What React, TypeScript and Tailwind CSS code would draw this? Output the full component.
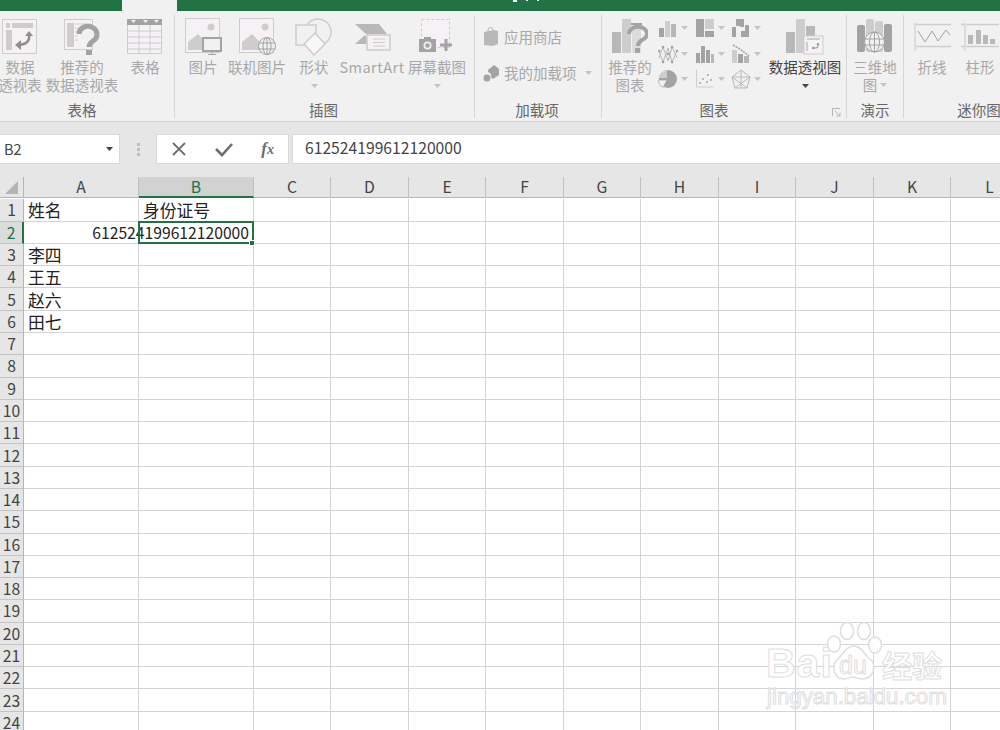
import type { ReactNode } from "react";

const G = "#b8b8b8";
const D = "#a3a3a3";
const L = "#f5f1f5";
const S = "#cdcdcd";

const columns = ["A", "B", "C", "D", "E", "F", "G", "H", "I", "J", "K", "L"];
const rows = Array.from({ length: 24 }, (_, i) => i + 1);
const names: Record<number, string> = { 1: "姓名", 3: "李四", 4: "王五", 5: "赵六", 6: "田七" };

function Caret({ dark }: { dark?: boolean }) {
  return (
    <svg width="7" height="4" viewBox="0 0 7 4">
      <path d="M0 0h7L3.500 4z" fill={dark ? "#444" : "#c4c4c4"} />
    </svg>
  );
}

function Btn({ w, icon, lines, caret, dark, wide }: { w: string; icon: ReactNode; lines: string[]; caret?: boolean; dark?: boolean; wide?: boolean }) {
  return (
    <div className={`${w} flex flex-col items-center shrink-0`}>
      <div className="h-[43px] flex items-center justify-center">{icon}</div>
      {lines.map((l) => (
        <div
          key={l}
          className={`h-[18px] leading-[18px] text-[14.500px] whitespace-nowrap ${dark ? "text-[#444444]" : "text-[#a8a8a8]"} ${wide ? "tracking-[0.5px]" : ""}`}
        >
          {l}
        </div>
      ))}
      {caret && (
        <div className="h-[18px] flex items-center pt-[2px]">
          <Caret dark={dark} />
        </div>
      )}
    </div>
  );
}

function Group({ w, label, children, pl, labelPr, noBorder }: { w: string; label: string; children: ReactNode; pl?: string; labelPr?: string; noBorder?: boolean }) {
  return (
    <div className={`${w} h-[103px] mt-[4px] shrink-0 flex flex-col relative ${noBorder ? "" : "border-r border-[#d6d6d6]"}`}>
      <div className={`flex-1 flex ${pl ?? ""}`}>{children}</div>
      <div className={`h-[18px] leading-[20px] text-center text-[14.500px] text-[#666666] whitespace-nowrap ${labelPr ?? ""}`}>{label}</div>
    </div>
  );
}

const PivotIcon = () => (
  <svg width="36" height="36" viewBox="0 0 36 36">
    <rect x=".5" y=".5" width="34" height="34" fill={L} stroke={S} />
    <rect x="4" y="4" width="4" height="5" fill={S} />
    <rect x="10" y="4" width="21" height="5" fill={S} />
    <rect x="4" y="11" width="6" height="20" fill={S} />
    <path d="M27 15c1 6-1 10-10 11" fill="none" stroke="#8f8f8f" strokeWidth="2.500" />
    <path d="M23 17l4-5 4 5zM19 21l-6 5 6 5z" fill="#8f8f8f" />
  </svg>
);

const RecPivotIcon = () => (
  <svg width="36" height="36" viewBox="0 0 36 36">
    <rect x=".5" y=".5" width="28" height="30" fill={L} stroke={S} />
    <rect x="3" y="4" width="7" height="24" fill={S} />
    <path d="M11 5h15M11 9h15M11 13h5M11 17h3M11 21h3" stroke={S} />
    <path d="M15 15a9 8 0 1 1 14 7c-3 2-4 3-4 6" fill="#f1f1f1" stroke={D} strokeWidth="5" />
    <rect x="22" y="31" width="6" height="5" fill={D} />
  </svg>
);

const TableIcon = () => (
  <svg width="36" height="36" viewBox="0 0 36 36">
    <rect x=".5" y=".5" width="34" height="34" fill={L} stroke={S} />
    <rect x="0" y="0" width="35" height="6" fill={D} />
    <path d="M4 1h5l-2.500 3zM16 1h5l-2.500 3zM27 1h5l-2.500 3z" fill="#f1f1f1" />
    <path d="M0 12h35M0 18h35M0 24h35M0 30h35M12 6v29M23 6v29" stroke={S} />
  </svg>
);

const PictureBase = () => (
  <>
    <rect x=".5" y=".5" width="34" height="34" fill={L} stroke={S} />
    <circle cx="26" cy="9" r="3.500" fill={S} />
    <path d="M3 32V24L13 16l8 8 5-2v10z" fill={S} />
  </>
);

const PictureIcon = () => (
  <svg width="37" height="37" viewBox="0 0 37 37">
    <PictureBase />
    <rect x="18" y="20" width="18" height="13" fill="#f1f1f1" stroke={D} strokeWidth="2" />
    <path d="M27 33v3M23 36.500h8" stroke={D} />
  </svg>
);

const OnlinePictureIcon = () => (
  <svg width="37" height="37" viewBox="0 0 37 37">
    <PictureBase />
    <circle cx="28" cy="28" r="8.500" fill="#f1f1f1" stroke={D} />
    <ellipse cx="28" cy="28" rx="4" ry="8.500" fill="none" stroke={D} />
    <path d="M20 25h16M20 31h16M28 19v18" stroke={D} />
  </svg>
);

const ShapesIcon = () => (
  <svg width="38" height="38" viewBox="0 0 38 38">
    <circle cx="23" cy="14" r="13" fill="none" stroke={S} strokeWidth="1.500" />
    <rect x="1" y="7" width="20" height="20" fill="#f1f1f1" stroke={S} strokeWidth="1.500" />
    <path d="M20 15l10 11-11 11-10-11z" fill="#f8f6f8" stroke={S} strokeWidth="1.500" />
  </svg>
);

const SmartArtIcon = () => (
  <svg width="37" height="28" viewBox="0 0 37 28">
    <path d="M1 1h24l8 10h-21zM1 21l10-9 4 9z" fill={G} />
    <rect x="13" y="12" width="23" height="15" fill={L} stroke={S} strokeWidth="1.500" />
    <path d="M19 16h12M19 19.500h12M19 23h12" stroke={S} />
  </svg>
);

const ScreenshotIcon = () => (
  <svg width="36" height="35" viewBox="0 0 36 35">
    <rect x="2.500" y=".5" width="28" height="28" fill={L} stroke={S} strokeDasharray="3 2" />
    <rect x="0" y="20" width="17" height="13" fill={D} />
    <rect x="5" y="18" width="7" height="3" fill={D} />
    <circle cx="8.500" cy="26.500" r="4" fill="#f1f1f1" />
    <circle cx="8.500" cy="26.500" r="2.300" fill={D} />
    <path d="M21 26h12M27 20v12" stroke={D} strokeWidth="3" />
  </svg>
);

const StoreIcon = () => (
  <svg width="16" height="20" viewBox="0 0 16 20">
    <path d="M1 5l10-2 4 1v13l-5 2-9-1z" fill={G} />
    <path d="M5 5V3a2.500 2.500 0 0 1 5 0v2" fill="none" stroke={G} />
  </svg>
);

const AddinIcon = () => (
  <svg width="16" height="17" viewBox="0 0 16 17">
    <path d="M5 5l6-5 5 4v6l-6 4-2-2a4 4 0 0 0-3-5z" fill={D} />
    <circle cx="4" cy="13" r="3.500" fill={D} />
  </svg>
);

const RecChartIcon = () => (
  <svg width="36" height="36" viewBox="0 0 36 36">
    <rect x="0" y="13" width="9" height="21" fill={G} />
    <rect x="10" y="0" width="9" height="34" fill={S} />
    <rect x="20" y="8" width="9" height="26" fill="#dcdcdc" />
    <path d="M17 15a9 7 0 1 1 13 6c-3 2-4 3-4 6" fill="none" stroke={D} strokeWidth="4" />
    <path d="M19 5h11" stroke={D} strokeWidth="2" />
    <rect x="23" y="29" width="5" height="5" fill={D} />
  </svg>
);

const Small = ({ children }: { children: ReactNode }) => (
  <div className="flex items-center gap-[3px] w-[36.500px]">
    <svg width="20" height="20" viewBox="0 0 20 20">
      {children}
    </svg>
    <Caret />
  </div>
);

const ChartGrid = () => (
  <div className="grid grid-cols-3 gap-y-[5.500px] w-[110px] pt-[3px]">
    <Small>
      <path d="M1 10h5v9H1z" fill={D} /><path d="M7 3h5v16H7z" fill={S} /><path d="M13 6h5v13h-5z" fill={G} />
    </Small>
    <Small>
      <path d="M1 1h8v18H1z" fill={D} /><path d="M10 1h9v10h-9z" fill={S} /><path d="M10 13h9v6h-9z" fill={D} />
    </Small>
    <Small>
      <path d="M1 9h4v10H1zM5 8h4V1h-4zM9 1h4v8H9zM10 13h4v6h-4zM14 7h4v12h-4z" fill={D} />
    </Small>
    <Small>
      <path d="M1 7l4 11 5-14 4 14 5-11M1 14L5 3l5 14 4-14 5 11" fill="none" stroke={G} />
      <path d="M5 3h.1M14 3h.1M5 18h.1M14 18h.1M1 7h.1M19 7h.1M10 10h.1" stroke={D} strokeWidth="2.500" strokeLinecap="round" />
    </Small>
    <Small>
      <path d="M1 9h4v10H1z" fill={D} /><path d="M6 2h4v17H6z" fill={D} /><path d="M11 6h4v13h-4z" fill={D} /><path d="M16 10h3v9h-3z" fill={G} />
    </Small>
    <Small>
      <path d="M1 6h5v13H1z" fill={S} /><path d="M7 10h5v9H7z" fill={D} /><path d="M13 12h5v7h-5z" fill={G} /><path d="M2 1l7 4 9 7" fill="none" stroke={D} strokeDasharray="2 1" strokeWidth="1.500" />
    </Small>
    <Small>
      <circle cx="10" cy="10" r="9" fill={D} /><path d="M9 11H0.5A9 9 0 0 0 5 18.500z" fill="#f1f1f1" stroke={D} strokeWidth=".7" /><path d="M9 9H1A9 9 0 0 1 9 1z" fill={S} />
    </Small>
    <Small>
      <path d="M1.500 1v17h17" fill="none" stroke={S} /><path d="M4 13h2v2H4zM7 9h2v2H7zM11 12h2v2h-2zM12 5h2v2h-2zM15 10h2v2h-2z" fill={G} />
    </Small>
    <Small>
      <path d="M10 1l9 7-3 11H4L1 8zM10 1v18M1 8l15 11M19 8L4 19M1 8h18" fill="none" stroke={G} />
    </Small>
  </div>
);

const PivotChartIcon = () => (
  <svg width="38" height="36" viewBox="0 0 38 36">
    <rect x="0" y="13" width="9" height="21" fill={G} />
    <rect x="10" y="0" width="9" height="34" fill={S} />
    <rect x="20" y="7" width="9" height="27" fill={G} />
    <rect x="18" y="17" width="19" height="18" fill={L} stroke={S} />
    <path d="M21 20h13M21 23v9" stroke={S} strokeWidth="2" />
    <path d="M32 25v2a2 2 0 0 1-2 2h-3M31 26l1-2 1 2M28 28l-2 1 2 1" fill="none" stroke="#8f8f8f" />
  </svg>
);

const MapIcon = () => (
  <svg width="36" height="35" viewBox="0 0 36 35">
    <rect x="0" y="6" width="8" height="27" rx="2" fill={D} />
    <rect x="9" y="0" width="8" height="33" rx="2" fill={S} />
    <rect x="18" y="2" width="8" height="31" rx="2" fill={S} />
    <rect x="27" y="5" width="8" height="28" rx="2" fill={D} />
    <circle cx="17.500" cy="23" r="10" fill="#f1f1f1" stroke={D} />
    <ellipse cx="17.500" cy="23" rx="5" ry="10" fill="none" stroke={D} />
    <path d="M8 20h19M8 26h19M17.500 13v20" stroke={D} />
  </svg>
);

const SparkLineIcon = () => (
  <svg width="37" height="28" viewBox="0 0 37 28">
    <path d="M0 1.500h37M0 23.500h37" stroke={S} strokeWidth="1.500" />
    <path d="M1 0v28" stroke="#dcdcdc" strokeWidth="2" />
    <path d="M4 8l7 11 7-11 6 10 8-11 4 5" fill="none" stroke={D} />
  </svg>
);

const SparkBarIcon = () => (
  <svg width="38" height="28" viewBox="0 0 38 28">
    <path d="M0 1.500h38M0 23.500h38" stroke={S} strokeWidth="1.500" />
    <path d="M4 0v28" stroke="#dcdcdc" strokeWidth="2" />
    <path d="M7 12h5v9H7zM15 7h5v14h-5zM22 12h5v9h-5zM29 16h5v5h-5z" fill={G} />
  </svg>
);

function Ribbon() {
  return (
    <div className="h-[111px] bg-[#f1f1f1] border-b border-[#d4d4d4] flex overflow-hidden shrink-0">
      <Group w="w-[175px]" label="表格" labelPr="pr-[10px]">
        <Btn w="w-[40px]" icon={<PivotIcon />} lines={["数据", "透视表"]} />
        <Btn w="w-[84px]" icon={<RecPivotIcon />} lines={["推荐的", "数据透视表"]} />
        <Btn w="w-[42px]" icon={<TableIcon />} lines={["表格"]} />
      </Group>
      <Group w="w-[300px]" label="插图" labelPr="pr-[2px]" pl="pl-[5px]">
        <Btn w="w-[46px]" icon={<PictureIcon />} lines={["图片"]} />
        <Btn w="w-[62px]" icon={<OnlinePictureIcon />} lines={["联机图片"]} />
        <Btn w="w-[52px]" icon={<ShapesIcon />} lines={["形状"]} caret />
        <Btn w="w-[64px]" icon={<SmartArtIcon />} lines={["SmartArt"]} wide />
        <Btn w="w-[66px]" icon={<ScreenshotIcon />} lines={["屏幕截图"]} caret />
      </Group>
      <Group w="w-[127px]" label="加载项" labelPr="pr-[2px]" pl="pl-[8px]">
        <div className="flex flex-col gap-[17px] pt-[12px] text-[14.500px] text-[#a8a8a8]">
          <div className="flex items-center gap-[5px] h-[20px]">
            <StoreIcon />
            <span>应用商店</span>
          </div>
          <div className="flex items-center gap-[5px] h-[18px]">
            <AddinIcon />
            <span className="mr-[3px]">我的加载项</span>
            <Caret />
          </div>
        </div>
      </Group>
      <Group w="w-[245px]" label="图表" labelPr="pr-[20px]" pl="pl-[7px]">
        <Btn w="w-[42px]" icon={<RecChartIcon />} lines={["推荐的", "图表"]} />
        <div className="ml-[7px]">
          <ChartGrid />
        </div>
        <Btn w="w-[74px]" icon={<PivotChartIcon />} lines={["数据透视图"]} caret dark />
        <svg className="absolute right-[5px] bottom-[1px]" width="9" height="9" viewBox="0 0 9 9">
          <path d="M.5 8V.5H8M3 3l5 5M8 4.500V8H4.500" fill="none" stroke="#b5b5b5" />
        </svg>
      </Group>
      <Group w="w-[57px]" label="演示">
        <div className="w-full flex flex-col items-center">
          <div className="h-[43px] flex items-center">
            <MapIcon />
          </div>
          <div className="h-[18px] leading-[18px] text-[14.500px] text-[#a8a8a8]">三维地</div>
          <div className="h-[18px] leading-[18px] text-[14.500px] text-[#a8a8a8] flex items-center gap-[3px]">
            图<Caret />
          </div>
        </div>
      </Group>
      <Group w="w-[150px]" label="迷你图" noBorder>
        <div className="flex pl-[4px]">
          <Btn w="w-[48px]" icon={<SparkLineIcon />} lines={["折线"]} />
          <Btn w="w-[48px]" icon={<SparkBarIcon />} lines={["柱形"]} />
        </div>
      </Group>
    </div>
  );
}

function FormulaBar() {
  return (
    <div className="h-[55px] bg-[#e6e6e6] flex items-start pt-[12px] shrink-0">
      <div className="w-[120px] h-[30px] bg-white border border-[#d9d9d9] border-l-0 flex items-center justify-between pl-[4px] pr-[6px] text-[14.500px] text-[#444444]">
        <span>B2</span>
        <Caret dark />
      </div>
      <div className="w-[36px] h-[30px] flex items-center justify-center">
        <div className="flex flex-col gap-[2px]">
          <div className="w-[3px] h-[3px] bg-[#bdbdbd]" />
          <div className="w-[3px] h-[3px] bg-[#bdbdbd]" />
          <div className="w-[3px] h-[3px] bg-[#bdbdbd]" />
        </div>
      </div>
      <div className="w-[133px] h-[30px] bg-white border border-[#d9d9d9] flex items-center justify-between pl-[14px] pr-[14px]">
        <svg width="16" height="16" viewBox="0 0 16 16">
          <path d="M2 2l12 12M14 2L2 14" stroke="#6e6e6e" strokeWidth="1.800" />
        </svg>
        <svg width="18" height="16" viewBox="0 0 18 16">
          <path d="M1 8l6 6L17 3" fill="none" stroke="#6e6e6e" strokeWidth="2.600" />
        </svg>
        <span className="text-[#6e6e6e] text-[17px] italic font-['Liberation_Serif',serif] font-bold">
          f<span className="text-[14px]">x</span>
        </span>
      </div>
      <div className="ml-[3px] flex-1 h-[30px] bg-white border border-[#d9d9d9] border-r-0 flex items-center pl-[12px] pb-[2px] text-[15.700px] text-[#444444]">
        612524199612120000
      </div>
    </div>
  );
}

function Sheet() {
  return (
    <div className="flex-1 overflow-hidden bg-white">
      <div className="grid w-[1029px] grid-cols-[24px_115px_115px_77px_78px_77px_78px_77px_78px_77px_78px_77px_78px] auto-rows-[22.290px] text-[15.700px] leading-[18px] text-[#222222]">
        <div className="h-[21px] bg-[#e6e6e6] border-r border-b border-[#b5b5b5] flex items-center justify-center">
          <svg width="15" height="15" viewBox="0 0 15 15">
            <path d="M14 1v13H1z" fill="#b4b4b4" />
          </svg>
        </div>
        {columns.map((c) => (
          <div
            key={c}
            className={
              c === "B"
                ? "h-[21px] bg-[#d2d2d2] border-r border-[#c0c0c0] border-b-2 border-b-[#217346] text-[#217346] flex items-center justify-center"
                : "h-[21px] bg-[#e6e6e6] border-r border-b border-[#c0c0c0] border-b-[#b5b5b5] text-[#444444] flex items-center justify-center"
            }
          >
            {c}
          </div>
        ))}
        {rows.map((r) => (
          <Row key={r} r={r} />
        ))}
      </div>
    </div>
  );
}

function Row({ r }: { r: number }) {
  return (
    <>
      <div
        className={
          r === 2
            ? "bg-[#dcdcdc] border-b border-[#c4c4c4] border-r-2 border-r-[#217346] text-[#217346] pt-[1px] flex items-center justify-center"
            : "bg-[#e6e6e6] border-b border-[#c4c4c4] border-r border-r-[#b5b5b5] text-[#444444] pt-[1px] flex items-center justify-center"
        }
      >
        {r}
      </div>
      {columns.map((c) => {
        if (r === 2 && c === "B") {
          return (
            <div key={c} className="relative flex items-center justify-end pt-[1px] pr-[4px] whitespace-nowrap border-r border-b border-[#d4d4d4]">
              612524199612120000
              <div className="absolute left-[-1px] top-[-1px] right-[-1px] bottom-[-1px] border-2 border-[#217346]" />
              <div className="absolute right-[-2px] bottom-[-3px] w-[6px] h-[6px] bg-[#217346] border border-white" />
            </div>
          );
        }
        const text = c === "A" ? names[r] : c === "B" && r === 1 ? "身份证号" : undefined;
        const noRight = r === 2 && c === "A";
        return (
          <div
            key={c}
            className={`flex items-center pt-[1px] pl-[4px] whitespace-nowrap text-[16.800px] border-b border-[#d4d4d4] ${noRight ? "" : "border-r"}`}
          >
            {text}
          </div>
        );
      })}
    </>
  );
}

function Watermark() {
  const outline = "text-white [-webkit-text-stroke:1px_#dedede] font-['Liberation_Sans',sans-serif]";
  return (
    <div className="absolute left-[765px] top-[620px] w-[185px] h-[90px] pointer-events-none">
      <span className={`absolute left-[1px] top-[20px] text-[41px] leading-[46px] font-bold tracking-[1px] ${outline}`}>Bai</span>
      <svg className="absolute left-[58px] top-[2px]" width="62" height="60" viewBox="0 0 62 60">
        <g fill="#ffffff" stroke="#dedede" strokeWidth="1.500">
          <ellipse cx="11" cy="22" rx="6.500" ry="8" />
          <ellipse cx="24" cy="9" rx="6.500" ry="8.500" />
          <ellipse cx="41" cy="9" rx="6.500" ry="8.500" />
          <ellipse cx="52" cy="23" rx="6.500" ry="8" />
          <path d="M31 24c8 0 10 9 16 13 7 6 4 20-8 20-4 0-6-2-9-2s-5 2-9 2c-10 0-13-13-7-19 6-5 9-14 17-14z" />
        </g>
      </svg>
      <span className={`absolute left-[74px] top-[30px] text-[25px] leading-[30px] ${outline}`}>du</span>
      <span className={`absolute left-[117px] top-[26px] text-[30px] leading-[36px] font-['Noto_Sans_CJK_SC',sans-serif] font-bold ${outline}`}>经验</span>
      <span className={`absolute left-[2px] top-[64px] text-[22.300px] leading-[26px] ${outline}`}>jingyan.baidu.com</span>
    </div>
  );
}

export default function App() {
  return (
    <div className="relative w-[1000px] h-[730px] overflow-hidden flex flex-col bg-white font-['Noto_Sans_CJK_SC','Noto_Sans',sans-serif]">
      <div className="h-[11px] bg-[#217346] flex shrink-0">
        <div className="ml-[122px] w-[55px] h-[12px] bg-[#f1f1f1]" />
        <div className="ml-[336px] flex gap-[9px]">
          <div className="w-[4px] h-[2px] bg-white" />
          <div className="w-[2px] h-[1px] bg-white" />
          <div className="w-[2px] h-[1px] bg-white" />
        </div>
      </div>
      <Ribbon />
      <FormulaBar />
      <Sheet />
      <Watermark />
    </div>
  );
}
